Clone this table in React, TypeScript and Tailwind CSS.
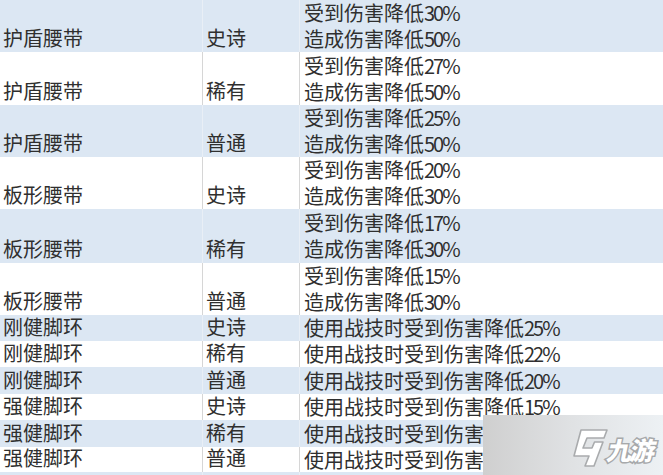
import React from "react"

type Row = {
  name: string
  rarity: string
  lines: string[]
  blue: boolean
  h: string
}

const ROWS: Row[] = [
  { name: "护盾腰带", rarity: "史诗", lines: ["受到伤害降低30%", "造成伤害降低50%"], blue: true, h: "h-[52px]" },
  { name: "护盾腰带", rarity: "稀有", lines: ["受到伤害降低27%", "造成伤害降低50%"], blue: false, h: "h-[53px]" },
  { name: "护盾腰带", rarity: "普通", lines: ["受到伤害降低25%", "造成伤害降低50%"], blue: true, h: "h-[52px]" },
  { name: "板形腰带", rarity: "史诗", lines: ["受到伤害降低20%", "造成伤害降低30%"], blue: false, h: "h-[52px]" },
  { name: "板形腰带", rarity: "稀有", lines: ["受到伤害降低17%", "造成伤害降低30%"], blue: true, h: "h-[54px]" },
  { name: "板形腰带", rarity: "普通", lines: ["受到伤害降低15%", "造成伤害降低30%"], blue: false, h: "h-[52px]" },
  { name: "刚健脚环", rarity: "史诗", lines: ["使用战技时受到伤害降低25%"], blue: true, h: "h-[26px]" },
  { name: "刚健脚环", rarity: "稀有", lines: ["使用战技时受到伤害降低22%"], blue: false, h: "h-[26px]" },
  { name: "刚健脚环", rarity: "普通", lines: ["使用战技时受到伤害降低20%"], blue: true, h: "h-[27px]" },
  { name: "强健脚环", rarity: "史诗", lines: ["使用战技时受到伤害降低15%"], blue: false, h: "h-[26px]" },
  { name: "强健脚环", rarity: "稀有", lines: ["使用战技时受到伤害降低12%"], blue: true, h: "h-[27px]" },
  { name: "强健脚环", rarity: "普通", lines: ["使用战技时受到伤害降低10%"], blue: false, h: "h-[25px]" },
  { name: "", rarity: "", lines: [""], blue: true, h: "h-[26px]" },
]

// digits in the sheet are narrower than the CJK glyphs
function Effect({ text }: { text: string }) {
  const m = text.match(/^(.*?)(\d+%)$/)
  if (!m) return <>{text}</>
  return (
    <>
      {m[1]}
      <span className="tracking-[-2px]">{m[2]}</span>
    </>
  )
}

function TableRow({ row }: { row: Row }) {
  const bg = row.blue ? "bg-[#dce7f3]" : "bg-white"
  const line = row.blue ? "border-[#e9eff6]" : "border-[#d6d6d6]"
  return (
    <div className={`flex ${row.h} ${bg} shrink-0`}>
      <div className={`w-[203px] shrink-0 flex items-end pl-[3px] pb-[1px] border-r ${line}`}>
        <span className="leading-[26px]">{row.name}</span>
      </div>
      <div className={`w-[97px] shrink-0 flex items-end pl-[3px] pb-[1px] border-r ${line}`}>
        <span className="leading-[26px]">{row.rarity}</span>
      </div>
      <div className="flex-1 flex flex-col justify-center pl-[4px]">
        {row.lines.map((l, i) => (
          <span key={i} className="leading-[26px] whitespace-nowrap">
            <Effect text={l} />
          </span>
        ))}
      </div>
    </div>
  )
}

function Watermark() {
  return (
    <div className="absolute left-[483px] top-[415px] w-[180px] h-[60px] bg-gradient-to-r from-[#cfcfcf] via-[#e0e2e4] to-[#edf1f4] flex items-center pl-[88px]">
      <svg width="38" height="40" viewBox="0 0 38 40" className="mt-[6px] shrink-0">
        <path
          d="M10 2 L36 2 L33 10 L16 10 L12 20 L21 20 L23.5 14 L32 14 L23 38 L14 38 L18 28 L3 28 Z"
          fill="#ffffff"
          stroke="#a9abad"
          strokeWidth="1.6"
          strokeLinejoin="round"
        />
      </svg>
      <span
        className="ml-[-1px] mt-[8px] text-[25px] leading-none font-black text-white tracking-[-2px] -skew-x-12 whitespace-nowrap [-webkit-text-stroke:3px_#a7a9ab] [paint-order:stroke_fill]"
        style={{ fontFamily: '"Noto Sans CJK SC", sans-serif' }}
      >
        九游
      </span>
    </div>
  )
}

export default function App() {
  return (
    <div
      className="relative w-[663px] h-[475px] overflow-hidden bg-white text-[20px] text-[#2f2f2f]"
      style={{ fontFamily: '"Noto Sans CJK SC", "Noto Sans", sans-serif' }}
    >
      <div className="flex flex-col">
        {ROWS.map((r, i) => (
          <TableRow key={i} row={r} />
        ))}
      </div>
      <Watermark />
    </div>
  )
}
